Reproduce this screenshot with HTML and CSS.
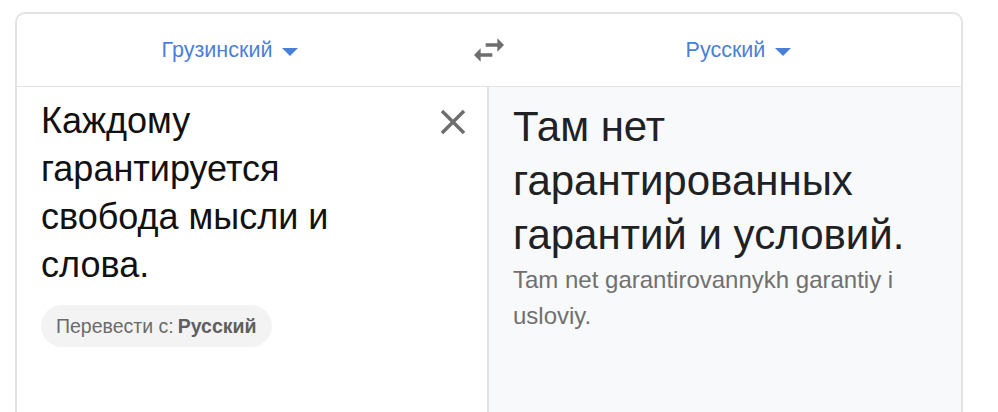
FILE: index.html
```html
<!DOCTYPE html>
<html lang="ru">
<head>
<meta charset="utf-8">
<link rel="stylesheet" href="styles.css">
</head>
<body>
<div class="page">
  <div class="card">
    <div class="header">
      <div class="lang lang-src">Грузинский <span class="caret"></span></div>
      <div class="swap">
        <svg width="40" height="40" viewBox="0 0 24 24"><path d="M6.99 11L3 15l3.99 4v-3H14v-2H6.99v-3zM21 9l-3.99-4v3H10v2h7.01v3L21 9z" fill="#6e6e6e"/></svg>
      </div>
      <div class="lang lang-dst">Русский <span class="caret"></span></div>
    </div>
    <div class="panes">
      <div class="pane pane-src">
        <div class="src-row">
          <div class="src-text">Каждому гарантируется свобода мысли и слова.</div>
          <div class="clear">
            <svg width="42" height="42" viewBox="0 0 24 24"><path d="M19 6.41 17.59 5 12 10.59 6.41 5 5 6.41 10.59 12 5 17.59 6.41 19 12 13.41 17.59 19 19 17.59 13.41 12z" fill="#6e6e6e"/></svg>
          </div>
        </div>
        <div class="chip">Перевести с:<b>Русский</b></div>
      </div>
      <div class="pane pane-dst">
        <div class="dst-text">Там нет гарантированных гарантий и условий.</div>
        <div class="translit">Tam net garantirovannykh garantiy i usloviy.</div>
      </div>
    </div>
  </div>
</div>
</body>
</html>
```
FILE: styles.css
```css
* { box-sizing: border-box; }
html, body { margin: 0; padding: 0; background: #fff; }
body { font-family: "Liberation Sans", Arial, sans-serif; }
.page { padding: 12px 35px 0 15px; }
.card {
  border: 2px solid #e3e3e3;
  border-bottom: none;
  border-radius: 10px 10px 0 0;
  height: 420px;
  overflow: hidden;
  display: flex;
  flex-direction: column;
}
.header {
  height: 73px;
  border-bottom: 1px solid #e3e3e3;
  display: grid;
  grid-template-columns: 1fr 64px 1fr;
  align-items: center;
}
.lang {
  color: #4a7fd8;
  font-size: 21.5px;
  display: flex;
  align-items: center;
  justify-content: center;
  gap: 10px;
}
.lang-src { padding-right: 14px; }
.lang-dst { padding-right: 5px; }
.caret {
  width: 0; height: 0;
  border-left: 8px solid transparent;
  border-right: 8px solid transparent;
  border-top: 8px solid #4a7fd8;
  margin-top: 3px;
}
.swap { display: flex; justify-content: center; align-items: center; height: 40px; }
.panes { flex: 1; display: grid; grid-template-columns: 1fr 1fr; }
.pane { min-width: 0; }
.pane-src { padding: 10px 13px 0 24px; border-right: 2px solid #e3e3e3; }
.src-row { display: flex; align-items: flex-start; }
.src-text { flex: 1; font-size: 36px; line-height: 48px; color: #111; padding-right: 40px; }
.clear { padding-top: 4px; }
.chip {
  display: inline-flex;
  align-items: center;
  height: 42px;
  margin-top: 16px;
  padding: 0 15px;
  border-radius: 21px;
  background: #f3f3f3;
  font-size: 19.5px;
  color: #6b6b6b;
  gap: 4px;
}
.chip b { color: #5f5f5f; }
.pane-dst { background: #f8f9fa; padding: 13px 24px 0 24px; }
.dst-text { font-size: 42px; line-height: 54px; color: #202124; }
.translit { font-size: 24px; line-height: 36px; color: #707070; }
```
